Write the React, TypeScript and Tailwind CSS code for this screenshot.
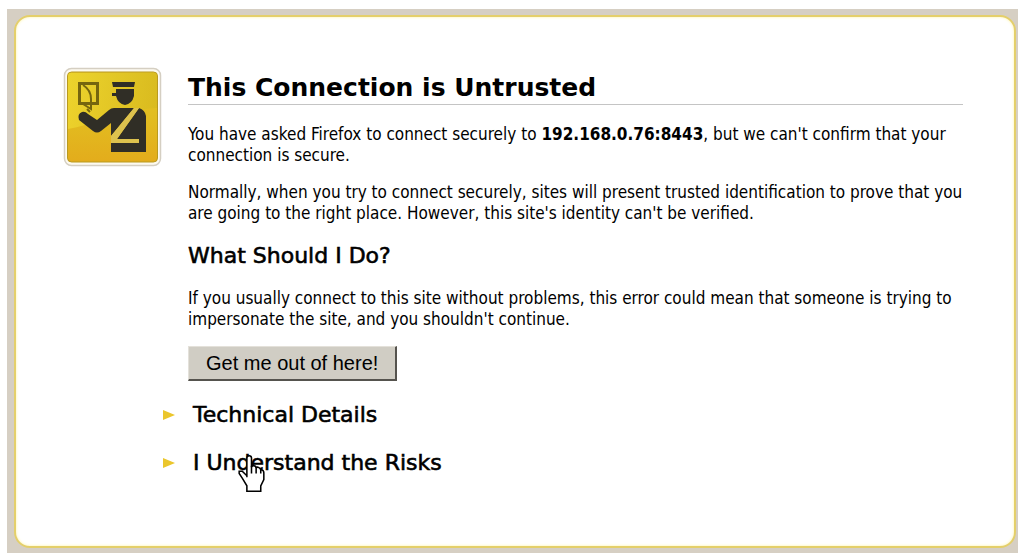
import { useState } from "react";
import type { ReactNode } from "react";

function OfficerIcon() {
  return (
    <svg viewBox="0 0 100 100" className="size-[100px] shrink-0" role="img" aria-label="Passport officer">
      <defs>
        <linearGradient id="gold" x1="0" y1="0" x2="0" y2="1">
          <stop offset="0" stopColor="#e3c526" />
          <stop offset="0.5" stopColor="#e2bd20" />
          <stop offset="1" stopColor="#e3ac1c" />
        </linearGradient>
        <linearGradient id="shine" x1="0" y1="0" x2="1" y2="0">
          <stop offset="0" stopColor="#f0da30" />
          <stop offset="1" stopColor="#d6b91e" />
        </linearGradient>
      </defs>
      <rect x="1.5" y="1.5" width="96" height="97" rx="7" fill="#fdfaf0" stroke="#d5cfc2" strokeWidth="1.5" />
      <rect x="4.500" y="5" width="90" height="90" rx="4" fill="url(#gold)" stroke="#b99a20" strokeWidth="1" />
      <path d="M5 9q0-3 3-3h83q3 0 3 3v32C72 42 62 48 43 52 29 56 16 60 5 62z" fill="url(#shine)" opacity="0.7" />
      <path d="M16.500 16.500h18v20h-18z" fill="none" stroke="#75650f" strokeWidth="3" />
      <path d="M20 18q8 5 8 14v10l-8-5M24 42l3 3" fill="none" stroke="#75650f" strokeWidth="2" />
      <g fill="#302e26">
        <path d="M49 15h23l-1 5H50z" />
        <path d="M53 22h18v7q-2 8-9 9-7-1-9-9h-4v-3h4z" />
        <path d="M19 45q3-1 6 2l9 6 12-10q2-2 5-2h20L48 69V56L38 64q-4 3-8 0L16 53q-2-6 3-8z" />
        <path d="M76 41q6 2 7 8v36H48V76h28v-4H54z" />
      </g>
      <path d="M71 41h5L54 72h22v4H48v-7z" fill="#ddc24e" />
    </svg>
  );
}

function HandCursor() {
  return (
    <svg viewBox="0 0 17 24" className="pointer-events-none absolute top-1 left-[75px] h-[37px] w-[27px]" aria-hidden="true">
      <path
        d="M5.500 14.500V2Q5.500.500 7 .500T8.500 2v6Q8.500 7 10 7t1.500 1.500Q12 7.500 13 8t1.500 1.500q2 0 2 2V16l-2 4v3.500h-9V20l-3-5-2-3v-1.500h2l3 3"
        fill="#fff"
        stroke="#000"
        strokeWidth="1"
      />
      <path d="M8.500 7v5M11.500 8v4M14.500 9v3" stroke="#000" strokeWidth="1" />
    </svg>
  );
}

function Section({ title, detail, children }: { title: string; detail: string; children?: ReactNode }) {
  const [open, setOpen] = useState(false);
  return (
    <section>
      <h2 className="relative -ml-[25px] text-[22px] leading-6">
        <button
          type="button"
          aria-expanded={open}
          onClick={() => setOpen(!open)}
          className="flex cursor-pointer items-center gap-[18px] text-left font-['DejaVu_Sans',sans-serif] [-webkit-text-stroke:0.6px_black]"
        >
          <svg viewBox="0 0 12 10" className="h-2.5 w-3" aria-hidden="true">
            <path d="M0 0l12 5-12 5z" fill="#ebc62c" />
          </svg>
          {title}
        </button>
        {children}
      </h2>
      {open && <p className="mt-3 leading-[21px]">{detail}</p>}
    </section>
  );
}

export default function App() {
  return (
    <div className="bg-white px-[7px] pt-[9px] pb-2 font-['DejaVu_Sans_Condensed','DejaVu_Sans',sans-serif] text-[17px] text-black">
      <div className="bg-[#d6cfc3] pt-1.5 pr-0.5 pb-[5px] pl-[7px]">
        <main className="flex items-start gap-[25px] rounded-2xl border-2 border-[#e4cf6a] bg-white pt-[50px] pr-[51px] pb-[71px] pl-[47px] shadow-[inset_0_0_3px_#fff3a0]">
          <OfficerIcon />
          <div className="min-w-0 flex-1">
            <h1 className="border-b border-[#c4c4c4] pt-[5px] font-['DejaVu_Sans',sans-serif] text-[25px] leading-8 font-bold">
              This Connection is Untrusted
            </h1>
            <p className="mt-[19px] leading-[21px]">
              You have asked Firefox to connect securely to <strong>192.168.0.76:8443</strong>, but we can't confirm that
              your connection is secure.
            </p>
            <p className="mt-4 leading-[21px]">
              Normally, when you try to connect securely, sites will present trusted identification to prove that you are
              going to the right place. However, this site's identity can't be verified.
            </p>
            <h2 className="mt-5 font-['DejaVu_Sans',sans-serif] text-[22px] leading-6 [-webkit-text-stroke:0.6px_black]">
              What Should I Do?
            </h2>
            <p className="mt-5 leading-[21px]">
              If you usually connect to this site without problems, this error could mean that someone is trying to
              impersonate the site, and you shouldn't continue.
            </p>
            <button
              type="button"
              className="mt-4 block cursor-pointer border-t border-r-2 border-b-2 border-l border-t-[#e4e1da] border-r-[#55534e] border-b-[#55534e] border-l-[#e4e1da] bg-[#d0cdc4] px-[17px] py-1 font-['Liberation_Sans',sans-serif] text-xl leading-6"
            >
              Get me out of here!
            </button>
            <div className="mt-[22px] flex flex-col gap-6">
              <Section
                title="Technical Details"
                detail="The certificate is not trusted because the issuer certificate is unknown."
              />
              <Section
                title="I Understand the Risks"
                detail="If you understand what's going on, you can tell Firefox to start trusting this site's identification."
              >
                <HandCursor />
              </Section>
            </div>
          </div>
        </main>
      </div>
    </div>
  );
}
